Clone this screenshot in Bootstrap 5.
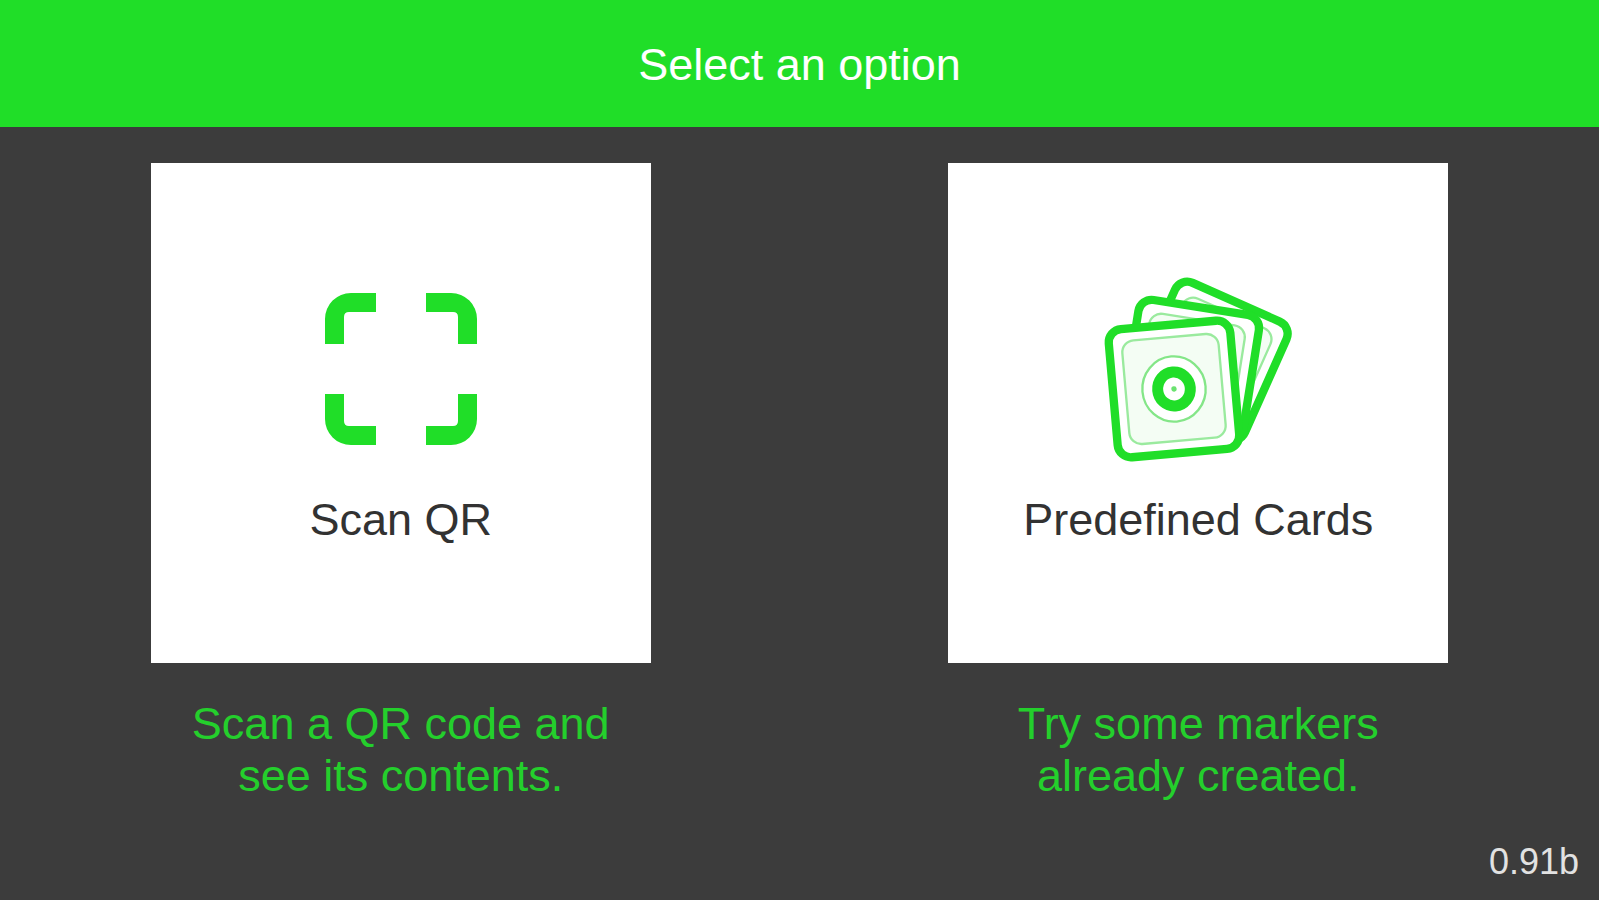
<!DOCTYPE html>
<html lang="en">
<head>
<meta charset="utf-8">
<meta name="viewport" content="width=device-width, initial-scale=1">
<title>Select an option</title>
<link href="https://cdn.jsdelivr.net/npm/bootstrap@5.3.0/dist/css/bootstrap.min.css" rel="stylesheet">
<style>
  :root { --brand: #20de28; --ink: #323232; --back: #3c3c3c; }
  body { background: var(--back); font-family: "Liberation Sans", Arial, sans-serif; font-size: 45px; line-height: 52px; }
  .top-bar { background: var(--brand); padding: 39px 16px 36px; }
  .top-bar h1 { font-size: 45px; line-height: 52px; font-weight: 400; }
  .options { padding: 36px 2px 0; }
  .option-tile { max-width: 500px; aspect-ratio: 1; gap: 25px; padding: 0 0 11px; font-size: 45px; line-height: 52px; --bs-btn-color: var(--ink); --bs-btn-bg: #fff; --bs-btn-hover-bg: #f2fdf2; --bs-btn-hover-color: var(--ink); --bs-btn-active-bg: #e4fae4; }
  .option-icon { width: 200px; height: 200px; }
  .option-note { max-width: 430px; margin: 35px 0 0; color: #24cf2c; }
  .version { padding: 0 20px 18px; color: #e2e2e2; font-size: 36px; line-height: 41px; }
</style>
</head>
<body class="d-flex flex-column min-vh-100">
  <header class="top-bar text-center text-white">
    <h1 class="m-0">Select an option</h1>
  </header>

  <main class="options container-fluid">
    <div class="row g-0">
      <section class="col-md-6 d-flex flex-column align-items-center">
        <button type="button" class="option-tile btn rounded-0 border-0 w-100 d-flex flex-column align-items-center justify-content-center" aria-describedby="scan-note">
          <svg class="option-icon" viewBox="0 0 200 200" fill="#20de28" aria-hidden="true">
            <path d="M24 75V50A26 26 0 0 1 50 24H75V43H48Q43 43 43 48V75Z"/>
            <path d="M24 75V50A26 26 0 0 1 50 24H75V43H48Q43 43 43 48V75Z" transform="matrix(-1 0 0 1 200 0)"/>
            <path d="M24 75V50A26 26 0 0 1 50 24H75V43H48Q43 43 43 48V75Z" transform="matrix(1 0 0 -1 0 200)"/>
            <path d="M24 75V50A26 26 0 0 1 50 24H75V43H48Q43 43 43 48V75Z" transform="rotate(180 100 100)"/>
          </svg>
          <span>Scan QR</span>
        </button>
        <p class="option-note text-center" id="scan-note">Scan a QR code and see its contents.</p>
      </section>

      <section class="col-md-6 d-flex flex-column align-items-center">
        <button type="button" class="option-tile btn rounded-0 border-0 w-100 d-flex flex-column align-items-center justify-content-center" aria-describedby="cards-note">
          <svg class="option-icon" viewBox="55 27 600 600" aria-hidden="true">
            <defs>
              <g id="blank-card">
                <rect x="-183" y="-193" width="366" height="386" rx="40" fill="#fff" stroke="#20de28" stroke-width="25"/>
                <rect x="-145" y="-156" width="290" height="312" rx="36" fill="#f4fdf4" stroke="#9aea9e" stroke-width="7"/>
              </g>
            </defs>
            <use href="#blank-card" transform="translate(391 303) rotate(24)"/>
            <use href="#blank-card" transform="translate(333 333) rotate(9)"/>
            <g transform="translate(283 387) rotate(-5)">
              <use href="#blank-card"/>
              <ellipse rx="95" ry="98" fill="#fff" stroke="#84e688" stroke-width="7"/>
              <ellipse rx="49" ry="51" fill="#fff" stroke="#20de28" stroke-width="33"/>
              <circle r="8" fill="#6be270"/>
            </g>
          </svg>
          <span>Predefined Cards</span>
        </button>
        <p class="option-note text-center" id="cards-note">Try some markers already created.</p>
      </section>
    </div>
  </main>

  <footer class="version mt-auto text-end">0.91b</footer>
  <script src="https://cdn.jsdelivr.net/npm/bootstrap@5.3.0/dist/js/bootstrap.bundle.min.js"></script>
</body>
</html>
